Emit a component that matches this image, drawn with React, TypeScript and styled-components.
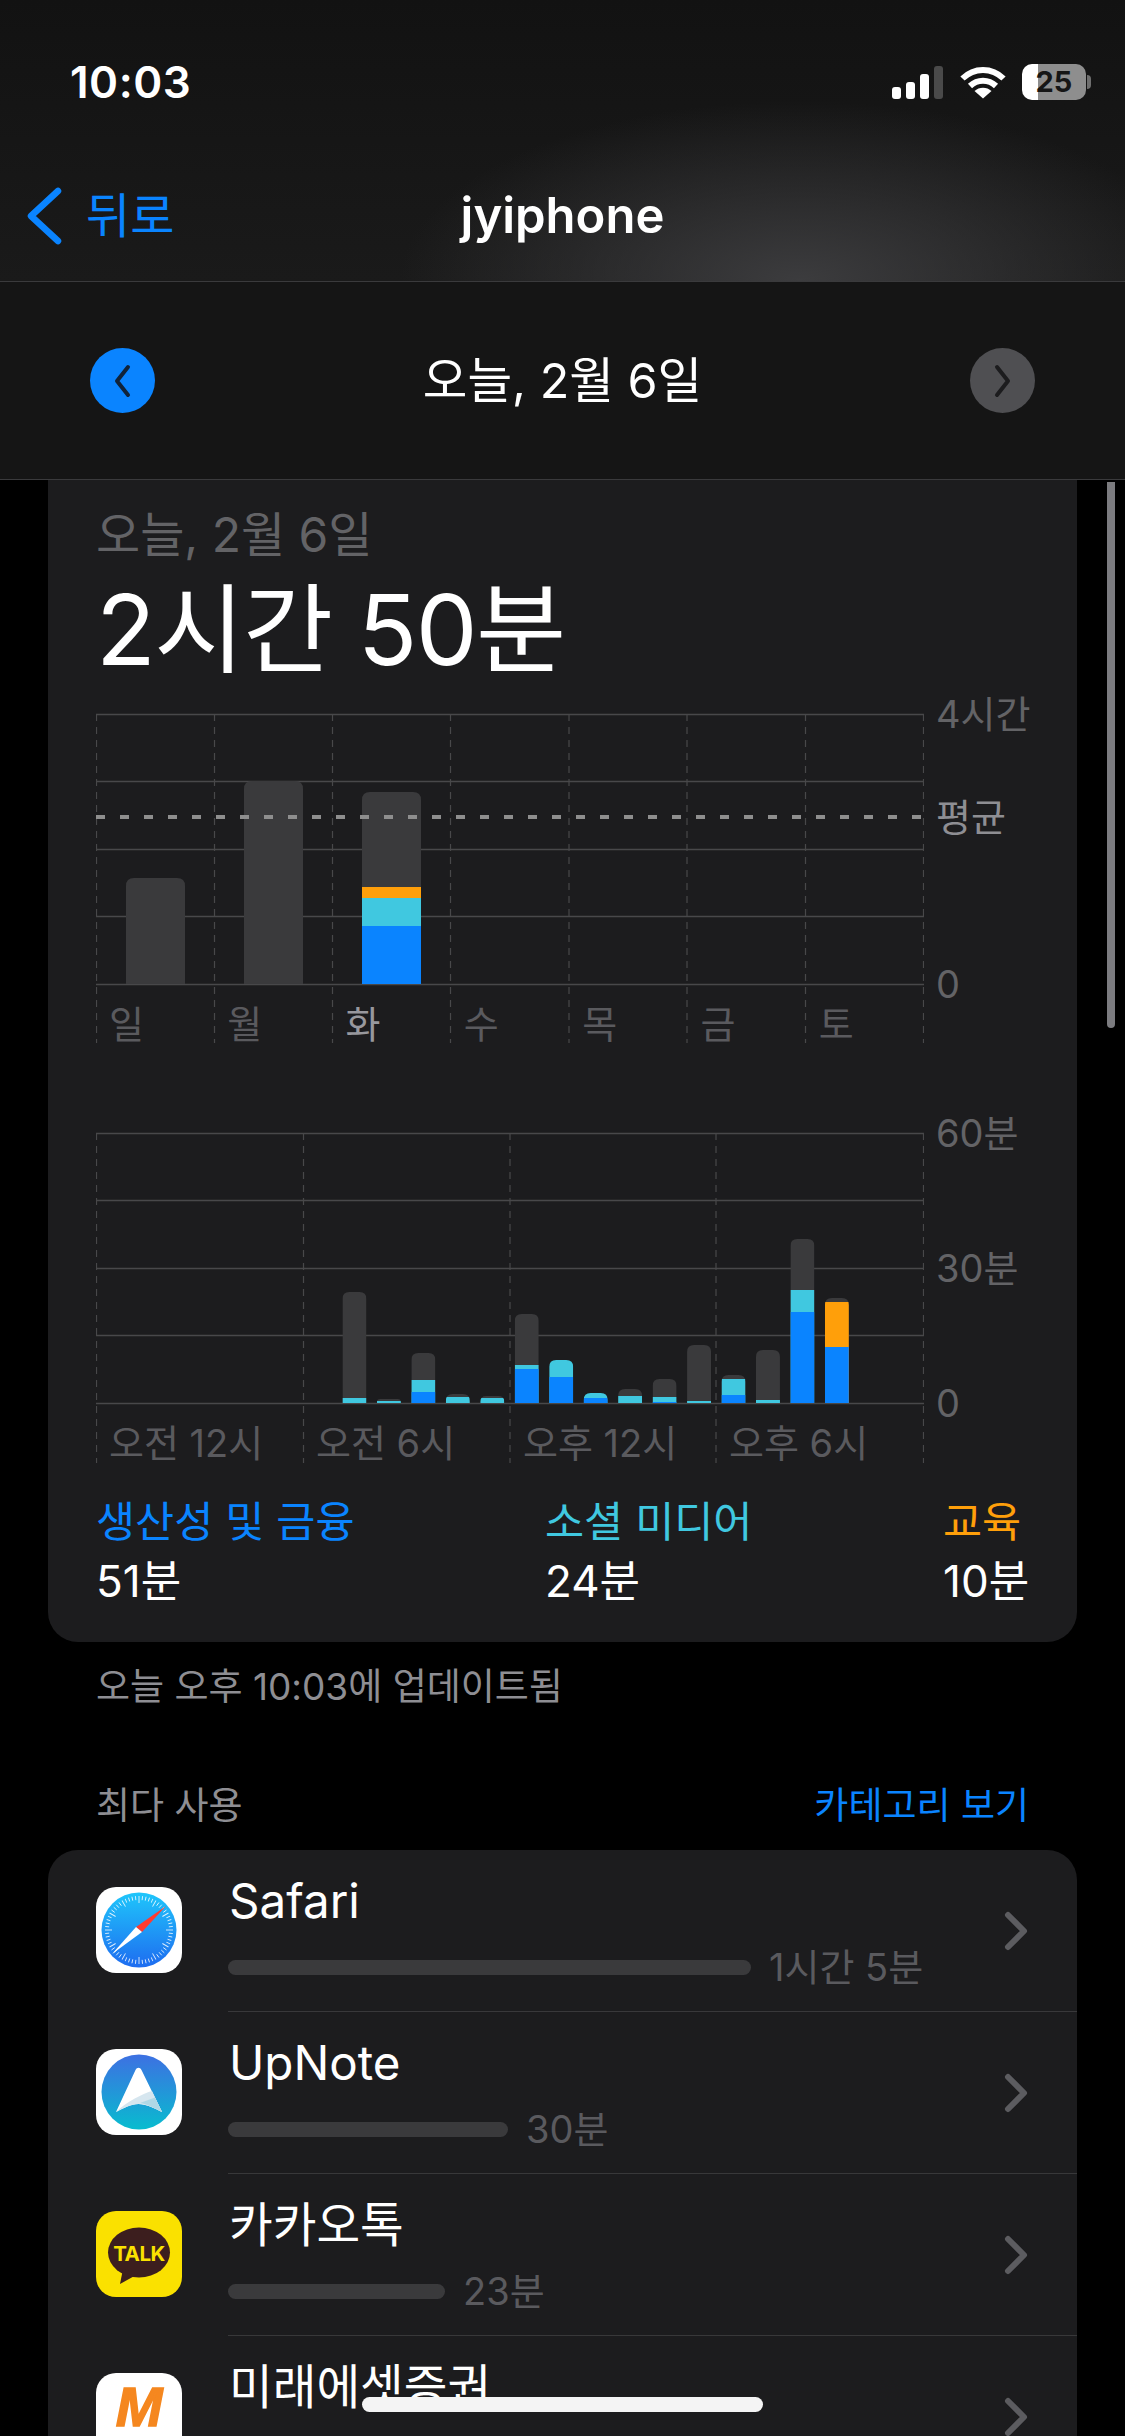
import React from 'react'
import styled, { createGlobalStyle } from 'styled-components'

const FONT = `Inter, "Noto Sans CJK KR", sans-serif`
const BLUE = '#0a84ff'
const CYAN = '#40c8e0'
const ORANGE = '#ff9f0a'
const GREY = '#3a3a3c'
const LINE = '#48484a'

const GlobalStyle = createGlobalStyle`
  html, body {
    margin: 0;
    background: #000;
  }
  body {
    font-family: ${FONT};
    color: #fff;
    -webkit-font-smoothing: antialiased;
  }
`

const Page = styled.div`
  position: relative;
  width: 1125px;
  height: 2436px;
  overflow: hidden;
  background: #000;
`
const Header = styled.header`
  background: #151515;
`
const TopBars = styled.div`
  background:
    radial-gradient(ellipse 400px 180px at 800px 100%, #3c3c3e 0%, rgba(60, 60, 62, 0) 100%),
    linear-gradient(180deg, #121212 0%, #1a1a1a 100%);
  border-bottom: 1px solid #3a3a3c;
`
const StatusBar = styled.div`
  height: 165px;
  display: flex;
  align-items: flex-start;
  justify-content: space-between;
  padding: 58px 39px 0 70px;
  box-sizing: border-box;
`
const Clock = styled.span`
  font-size: 44px;
  line-height: 48px;
  font-weight: 600;
  letter-spacing: 0.5px;
`
const StatusIcons = styled.div`
  display: flex;
  align-items: center;
  gap: 16px;
  margin-top: 6px;
`
const Battery = styled.div`
  position: relative;
  width: 64px;
  height: 36px;
  border-radius: 10px;
  background: linear-gradient(90deg, #fff 0 16px, #8e8e8e 16px 100%);
  color: #161616;
  font-size: 29px;
  line-height: 36px;
  font-weight: 700;
  text-align: center;
  &::after {
    content: '';
    position: absolute;
    left: 65px;
    top: 11px;
    width: 4px;
    height: 14px;
    border-radius: 0 7px 7px 0;
    background: #6f6f6f;
  }
`
const NavBar = styled.nav`
  height: 116px;
  display: grid;
  grid-template-columns: 1fr auto 1fr;
  align-items: center;
  padding-bottom: 14px;
  box-sizing: border-box;
`
const BackLink = styled.a`
  display: flex;
  align-items: center;
  gap: 24px;
  padding-left: 26px;
  color: ${BLUE};
  font-size: 48px;
  line-height: 56px;
`
const NavTitle = styled.h1`
  margin: 0;
  font-size: 49px;
  line-height: 56px;
  font-weight: 600;
`
const DateBar = styled.div`
  height: 198px;
  display: flex;
  align-items: center;
  justify-content: space-between;
  padding: 0 90px;
  box-sizing: border-box;
  border-bottom: 1px solid #3a3a3c;
`
const DateLabel = styled.span`
  font-size: 48.5px;
  line-height: 56px;
`
const RoundButton = styled.button<{ $active?: boolean }>`
  width: 65px;
  height: 65px;
  padding: 0;
  border: 0;
  border-radius: 50%;
  display: flex;
  align-items: center;
  justify-content: center;
  background: ${({ $active }) => ($active ? BLUE : '#4f4f52')};
`
const Card = styled.section`
  margin: 0 48px;
  background: #1c1c1e;
  border-radius: 0 0 30px 30px;
  padding: 27px 48px 36px;
`
const CardDate = styled.div`
  font-size: 48px;
  line-height: 56px;
  color: #636366;
`
const Total = styled.div`
  margin-top: 12px;
  font-size: 98px;
  line-height: 110px;
  letter-spacing: -1.5px;
`
const Chart = styled.div<{ $height: number; $gap: number }>`
  position: relative;
  margin-top: ${({ $gap }) => $gap}px;
  height: ${({ $height }) => $height}px;
  svg {
    display: block;
  }
`
const AxisLabel = styled.span<{ $y: number; $light?: boolean }>`
  position: absolute;
  left: 840px;
  top: ${({ $y }) => $y - 24}px;
  font-size: 38px;
  line-height: 48px;
  white-space: nowrap;
  color: ${({ $light }) => ($light ? '#8e8e93' : '#636366')};
`
const TickRow = styled.div<{ $top: number; $columns: string }>`
  position: absolute;
  left: 0;
  top: ${({ $top }) => $top}px;
  width: 828px;
  display: grid;
  grid-template-columns: ${({ $columns }) => $columns};
`
const Tick = styled.span<{ $current?: boolean }>`
  padding-left: 13px;
  font-size: 38px;
  line-height: 48px;
  white-space: nowrap;
  color: ${({ $current }) => ($current ? '#98989d' : '#5a5a5e')};
`
const Legend = styled.div`
  margin-top: 27px;
  display: grid;
  grid-template-columns: 449px 398px 1fr;
  white-space: nowrap;
`
const LegendName = styled.div<{ $color: string }>`
  font-size: 42.5px;
  line-height: 50px;
  color: ${({ $color }) => $color};
`
const LegendValue = styled.div`
  margin-top: 9px;
  font-size: 44px;
  line-height: 50px;
`
const Updated = styled.p`
  margin: 22px 48px 0 96px;
  font-size: 37px;
  line-height: 46px;
  color: #8e8e93;
`
const SectionHead = styled.div`
  margin: 73px 96px 0;
  display: flex;
  justify-content: space-between;
  font-size: 37px;
  line-height: 46px;
  color: #8e8e93;
`
const SectionLink = styled.a`
  color: ${BLUE};
`
const List = styled.div`
  margin: 21px 48px 0;
  background: #1c1c1e;
  border-radius: 30px;
`
const Row = styled.div`
  height: 162px;
  display: grid;
  grid-template-columns: 180px 1fr;
`
const AppIcon = styled.div<{ $bg: string }>`
  margin: 37px 0 0 48px;
  width: 86px;
  height: 86px;
  border-radius: 20px;
  background: ${({ $bg }) => $bg};
  overflow: hidden;
  svg {
    display: block;
  }
`
const RowBody = styled.div<{ $last?: boolean }>`
  position: relative;
  border-bottom: ${({ $last }) => ($last ? '0' : '1px solid #38383a')};
  box-sizing: border-box;
`
const AppName = styled.div`
  margin: 23px 0 0 1px;
  font-size: 47.5px;
  line-height: 56px;
`
const Usage = styled.div`
  margin-top: 16px;
  display: flex;
  align-items: center;
  gap: 18px;
`
const UsageBar = styled.div`
  height: 15px;
  border-radius: 8px;
  background: ${GREY};
`
const UsageTime = styled.span`
  font-size: 38px;
  line-height: 44px;
  color: #5a5a5e;
`
const RowChevron = styled.svg`
  position: absolute;
  right: 49px;
  top: 61px;
`
const ScrollThumb = styled.div`
  position: absolute;
  left: 1107px;
  top: 482px;
  width: 8px;
  height: 546px;
  border-radius: 0 0 4px 4px;
  background: #7c7c80;
`
const HomeIndicator = styled.div`
  position: absolute;
  left: 362px;
  top: 2397px;
  width: 401px;
  height: 15px;
  border-radius: 8px;
  background: #f4f4f4;
`

const SignalIcon = () => (
  <svg width="52" height="33" viewBox="0 0 52 33">
    <rect x="0" y="21" width="9" height="12" rx="3" fill="#fff" />
    <rect x="14" y="16" width="9" height="17" rx="3" fill="#fff" />
    <rect x="28" y="8" width="9" height="25" rx="3" fill="#fff" />
    <rect x="42" y="0" width="9" height="33" rx="3" fill="#4a4a4a" />
  </svg>
)

const WifiIcon = () => (
  <svg width="46" height="34" viewBox="0 0 46 34" fill="none" stroke="#fff" strokeWidth="6">
    <path d="M2.5 13.5C14 2 32 2 43.5 13.5" />
    <path d="M10 21C17.5 14 28.5 14 36 21" />
    <path d="M23 33.5L14.5 26C19 21.5 27 21.5 31.5 26Z" fill="#fff" stroke="none" />
  </svg>
)

const BackChevron = () => (
  <svg width="36" height="58" viewBox="0 0 36 58" fill="none" stroke={BLUE} strokeWidth="6.5" strokeLinecap="round" strokeLinejoin="round">
    <path d="M32 4L5 29L32 54" />
  </svg>
)

const ArrowGlyph = ({ dir, color }: { dir: 'left' | 'right'; color: string }) => (
  <svg width="24" height="34" viewBox="0 0 24 34" fill="none" stroke={color} strokeWidth="4" strokeLinecap="round" strokeLinejoin="round">
    <path d={dir === 'left' ? 'M17 3L6 17L17 31' : 'M7 3L18 17L7 31'} />
  </svg>
)

type Bar = { x: number; width: number; segments: [number, string][] }

const BASE_WEEK = 284
const BASE_HOUR = 283

const clipFor = (b: Bar, base: number, r: number) => {
  const top = b.segments[0][0]
  const rr = Math.min(r, (base - top) / 1.2)
  return `M${b.x} ${base}V${top + rr}Q${b.x} ${top} ${b.x + rr} ${top}H${b.x + b.width - rr}Q${b.x + b.width} ${top} ${b.x + b.width} ${top + rr}V${base}Z`
}

const Bars = ({ bars, base, radius, prefix }: { bars: Bar[]; base: number; radius: number; prefix: string }) => (
  <>
    {bars.map((b, i) => (
      <g key={i}>
        <clipPath id={`${prefix}${i}`}>
          <path d={clipFor(b, base, radius)} />
        </clipPath>
        {b.segments.map(([top, color], j) => (
          <rect key={j} x={b.x} y={top} width={b.width} height={base - top} fill={color} clipPath={`url(#${prefix}${i})`} />
        ))}
      </g>
    ))}
  </>
)

const Grid = ({ xs, ys, bottom }: { xs: number[]; ys: number[]; bottom: number }) => (
  <>
    {xs.map((x) => (
      <line key={x} x1={x} x2={x} y1={ys[0]} y2={bottom} stroke={LINE} strokeWidth="1.2" strokeDasharray="7 6" />
    ))}
    {ys.map((y) => (
      <line key={y} x1={0} x2={828} y1={y + 0.5} y2={y + 0.5} stroke={LINE} strokeWidth="1.3" />
    ))}
  </>
)

// y values are measured from the top of each chart box
const weekBars: Bar[] = [
  { x: 30, width: 59, segments: [[178, GREY]] },
  { x: 148, width: 59, segments: [[81, GREY]] },
  {
    x: 266,
    width: 59,
    segments: [
      [92, GREY],
      [187, ORANGE],
      [198, CYAN],
      [226, BLUE],
    ],
  },
]

const hourRows: [number, [number, string][]][] = [
  [7, [[172, GREY], [278, CYAN]]],
  [8, [[279, GREY], [281, CYAN]]],
  [9, [[233, GREY], [260, CYAN], [272, BLUE]]],
  [10, [[274, GREY], [277, CYAN]]],
  [11, [[276, GREY], [278, CYAN]]],
  [12, [[194, GREY], [245, CYAN], [249, BLUE]]],
  [13, [[240, CYAN], [257, BLUE]]],
  [14, [[273, CYAN], [278, BLUE]]],
  [15, [[269, GREY], [276, CYAN]]],
  [16, [[259, GREY], [277, CYAN], [282, BLUE]]],
  [17, [[225, GREY], [281, CYAN]]],
  [18, [[255, GREY], [259, CYAN], [275, BLUE]]],
  [19, [[230, GREY], [280, CYAN]]],
  [20, [[119, GREY], [170, CYAN], [192, BLUE]]],
  [21, [[178, GREY], [182, ORANGE], [227, BLUE]]],
]

const hourBars: Bar[] = hourRows.map(([h, segments]) => ({
  x: 34.46 * (h + 0.5) - 12,
  width: 24,
  segments,
}))

const days = ['일', '월', '화', '수', '목', '금', '토']
const hours = ['오전 12시', '오전 6시', '오후 12시', '오후 6시']

const SafariIcon = () => {
  const ticks = Array.from({ length: 60 }, (_, i) => i * 6)
  return (
    <svg width="86" height="86" viewBox="0 0 86 86">
      <defs>
        <linearGradient id="safariFill" x1="0" y1="0" x2="0" y2="1">
          <stop offset="0" stopColor="#1fc6fb" />
          <stop offset="1" stopColor="#1e6cf0" />
        </linearGradient>
      </defs>
      <circle cx="43" cy="43" r="37.5" fill="url(#safariFill)" />
      {ticks.map((a) => (
        <line key={a} x1="43" y1="9" x2="43" y2={a % 30 === 0 ? 16 : 13} stroke="#fff" strokeWidth="0.9" opacity="0.85" transform={`rotate(${a} 43 43)`} />
      ))}
      <path d="M70 19L46 45L40 40Z" fill="#ff3b30" />
      <path d="M16 67L40 40L46 45Z" fill="#fff" />
    </svg>
  )
}

const UpNoteIcon = () => (
  <svg width="86" height="86" viewBox="0 0 86 86">
    <defs>
      <linearGradient id="upFill" x1="0" y1="0" x2="0" y2="1">
        <stop offset="0" stopColor="#3d70e2" />
        <stop offset="1" stopColor="#08bccf" />
      </linearGradient>
    </defs>
    <circle cx="43" cy="43" r="37.5" fill="url(#upFill)" />
    <path d="M39.5 21C41 18 44 18 45.5 21L66 63C58 59 50 55 42.5 55C35 55 28 59 20 63Z" fill="#fff" />
    <path d="M20 63C30 53 48 44 56 42L66 63C58 59 50 55 42.5 55C35 55 28 59 20 63Z" fill="#d6e6ef" />
    <path d="M44 54L59 48.5L66 63C58 59 51 55 44 54Z" fill="#b0d8e6" />
  </svg>
)

const KakaoIcon = () => (
  <svg width="86" height="86" viewBox="0 0 86 86">
    <ellipse cx="43" cy="41.5" rx="31" ry="25" fill="#3c1e1e" />
    <path d="M27 58L24 73L42 63Z" fill="#3c1e1e" />
    <text x="43" y="49.5" textAnchor="middle" fontFamily="Inter, sans-serif" fontWeight="700" fontSize="20.5" letterSpacing="-0.5" fill="#fae100">
      TALK
    </text>
  </svg>
)

const MiraeIcon = () => (
  <svg width="86" height="86" viewBox="0 0 86 86">
    <text x="43" y="53" textAnchor="middle" fontFamily="Liberation Sans, sans-serif" fontStyle="italic" fontWeight="700" fontSize="56" fill="#f5871f" stroke="#f5871f" strokeWidth="1.5">
      M
    </text>
  </svg>
)

type AppUsage = { name: string; bg: string; icon: React.ReactNode; width?: number; time?: string }

const apps: AppUsage[] = [
  { name: 'Safari', bg: '#fff', icon: <SafariIcon />, width: 523, time: '1시간 5분' },
  { name: 'UpNote', bg: '#fff', icon: <UpNoteIcon />, width: 280, time: '30분' },
  { name: '카카오톡', bg: '#fae100', icon: <KakaoIcon />, width: 217, time: '23분' },
  { name: '미래에셋증권', bg: '#fff', icon: <MiraeIcon /> },
]

export default function App() {
  return (
    <Page>
      <GlobalStyle />
      <Header>
        <TopBars>
          <StatusBar>
            <Clock>10:03</Clock>
            <StatusIcons>
              <SignalIcon />
              <WifiIcon />
              <Battery>25</Battery>
            </StatusIcons>
          </StatusBar>
          <NavBar>
            <BackLink>
              <BackChevron />
              뒤로
            </BackLink>
            <NavTitle>jyiphone</NavTitle>
          </NavBar>
        </TopBars>
        <DateBar>
          <RoundButton $active>
            <ArrowGlyph dir="left" color="#10233a" />
          </RoundButton>
          <DateLabel>오늘, 2월 6일</DateLabel>
          <RoundButton>
            <ArrowGlyph dir="right" color="#1c1c1e" />
          </RoundButton>
        </DateBar>
      </Header>

      <Card>
        <CardDate>오늘, 2월 6일</CardDate>
        <Total>2시간 50분</Total>

        <Chart $height={360} $gap={15}>
          <svg width="828" height="360" viewBox="0 0 828 360">
            <Grid xs={[0.5, 118.5, 236.5, 354.5, 473, 591, 709.5, 827.5]} ys={[14, 81, 149, 216, 284]} bottom={343} />
            <Bars bars={weekBars} base={BASE_WEEK} radius={8} prefix="week" />
            <line x1="0" x2="828" y1="117" y2="117" stroke="#8e8e8e" strokeWidth="4" strokeDasharray="9 15" />
          </svg>
          <AxisLabel $y={14}>4시간</AxisLabel>
          <AxisLabel $y={117} $light>
            평균
          </AxisLabel>
          <AxisLabel $y={284}>0</AxisLabel>
          <TickRow $top={300} $columns="repeat(7, 1fr)">
            {days.map((d) => (
              <Tick key={d} $current={d === '화'}>
                {d}
              </Tick>
            ))}
          </TickRow>
        </Chart>

        <Chart $height={350} $gap={60}>
          <svg width="828" height="350" viewBox="0 0 828 350">
            <Grid xs={[0.5, 207.5, 414, 620, 827.5]} ys={[13, 80, 148, 215, 283]} bottom={343} />
            <Bars bars={hourBars} base={BASE_HOUR} radius={7} prefix="hour" />
          </svg>
          <AxisLabel $y={13}>60분</AxisLabel>
          <AxisLabel $y={148}>30분</AxisLabel>
          <AxisLabel $y={283}>0</AxisLabel>
          <TickRow $top={299} $columns="207px 207px 206px 208px">
            {hours.map((h) => (
              <Tick key={h}>{h}</Tick>
            ))}
          </TickRow>
        </Chart>

        <Legend>
          <div>
            <LegendName $color={BLUE}>생산성 및 금융</LegendName>
            <LegendValue>51분</LegendValue>
          </div>
          <div>
            <LegendName $color={CYAN}>소셜 미디어</LegendName>
            <LegendValue>24분</LegendValue>
          </div>
          <div>
            <LegendName $color={ORANGE}>교육</LegendName>
            <LegendValue>10분</LegendValue>
          </div>
        </Legend>
      </Card>

      <Updated>오늘 오후 10:03에 업데이트됨</Updated>
      <SectionHead>
        <span>최다 사용</span>
        <SectionLink>카테고리 보기</SectionLink>
      </SectionHead>

      <List>
        {apps.map((app, i) => (
          <Row key={app.name}>
            <AppIcon $bg={app.bg}>{app.icon}</AppIcon>
            <RowBody $last={i === apps.length - 1}>
              <AppName>{app.name}</AppName>
              {app.time && (
                <Usage>
                  <UsageBar style={{ width: app.width }} />
                  <UsageTime>{app.time}</UsageTime>
                </Usage>
              )}
              <RowChevron width="24" height="40" viewBox="0 0 24 40" fill="none" stroke="#5c5c60" strokeWidth="6" strokeLinecap="round" strokeLinejoin="round">
                <path d="M4 4L20 20L4 36" />
              </RowChevron>
            </RowBody>
          </Row>
        ))}
      </List>

      <ScrollThumb />
      <HomeIndicator />
    </Page>
  )
}
